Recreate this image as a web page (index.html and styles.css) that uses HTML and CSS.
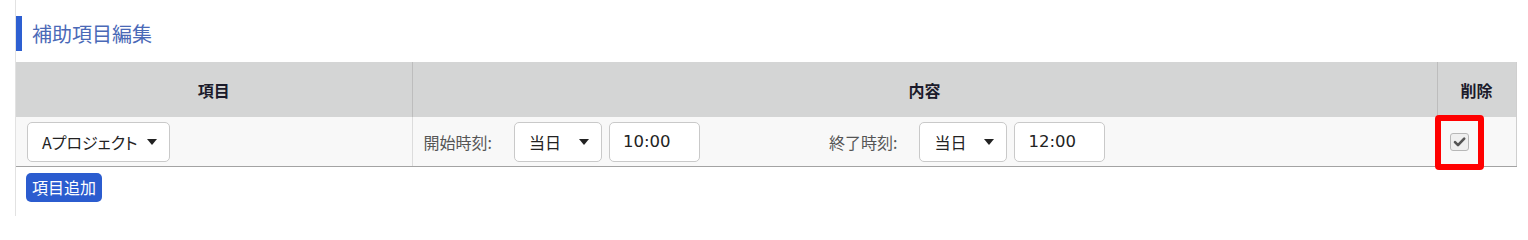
FILE: index.html
```html
<!DOCTYPE html>
<html lang="ja">
<head>
<meta charset="utf-8">
<title>補助項目編集</title>
<link rel="stylesheet" href="styles.css">
</head>
<body>
<div class="page">
  <h2 class="title">補助項目編集</h2>
  <table class="grid">
    <colgroup><col class="c1"><col class="c2"><col class="c3"></colgroup>
    <thead>
      <tr><th>項目</th><th>内容</th><th>削除</th></tr>
    </thead>
    <tbody>
      <tr>
        <td class="cell-item">
          <div class="select w-proj"><span class="sel-text">Aプロジェクト</span><i class="caret"></i></div>
        </td>
        <td class="cell-content">
          <div class="times">
            <div class="grp">
              <span class="lbl">開始時刻:</span>
              <div class="select w-day"><span class="sel-text">当日</span><i class="caret"></i></div>
              <div class="input">10:00</div>
            </div>
            <div class="grp">
              <span class="lbl">終了時刻:</span>
              <div class="select w-day"><span class="sel-text">当日</span><i class="caret"></i></div>
              <div class="input">12:00</div>
            </div>
          </div>
        </td>
        <td class="cell-del">
          <div class="del">
            <span class="cb"><svg viewBox="0 0 19 18" width="19" height="18"><path d="M5 9.2 L8 12.2 L14.2 5.6" fill="none" stroke="#555" stroke-width="2.6" stroke-linecap="round" stroke-linejoin="round"/></svg></span>
            <span class="mark"></span>
          </div>
        </td>
      </tr>
    </tbody>
  </table>
  <button class="add" type="button">項目追加</button>
</div>
</body>
</html>
```
FILE: styles.css
```css
html, body {
  margin: 0;
  padding: 0;
  background: #fff;
}
body {
  font-family: "Noto Sans CJK JP", sans-serif;
  font-size: 16px;
  color: #222;
}
.page {
  margin-left: 15px;
  border-left: 1px solid #e2e2e2;
  height: 216px;
  box-sizing: border-box;
  padding-top: 16px;
}
.title {
  margin: 0;
  height: 35px;
  line-height: 35px;
  border-left: 6px solid #2d5fd1;
  padding-left: 10px;
  font-size: 20px;
  font-weight: normal;
  color: #4a69b7;
}
.grid {
  margin-top: 11px;
  width: 1500px;
  border-collapse: collapse;
  table-layout: fixed;
}
.c1 { width: 396px; }
.c2 { width: 1025px; }
.c3 { width: 79px; }
.grid th {
  height: 55px;
  padding: 0;
  background: #d4d5d5;
  font-weight: bold;
  font-size: 16px;
  color: #1b1b2b;
  border-right: 1px solid #bdbdbd;
}
.grid th:last-child { border-right: 1px solid #cfcfcf; }
.grid td {
  height: 49px;
  padding: 0;
  background: #f8f8f8;
  border-bottom: 1px solid #a3a3a3;
  border-right: 1px solid #dcdcdc;
  vertical-align: middle;
}
.grid td:last-child { border-right: 1px solid #cfcfcf; }
.cell-item { padding-left: 11px !important; }
.cell-content { padding-left: 11px !important; }
.cell-del { padding-left: 12px !important; }

.select {
  display: flex;
  align-items: center;
  justify-content: space-between;
  box-sizing: border-box;
  height: 40px;
  padding: 0 12px 0 14px;
  border: 1px solid #c9c9c9;
  border-radius: 5px;
  background: #fff;
  color: #222;
  font-size: 16px;
}
.sel-text { font-feature-settings: "palt"; }
.w-proj { width: 143px; }
.w-day { width: 88px; }
.caret {
  width: 0;
  height: 0;
  border-left: 5px solid transparent;
  border-right: 5px solid transparent;
  border-top: 6px solid #222;
}
.times {
  display: flex;
  align-items: center;
  gap: 129px;
}
.grp {
  display: flex;
  align-items: center;
}
.lbl {
  color: #555;
  font-size: 16px;
  margin-right: 22px;
}
.input {
  box-sizing: border-box;
  width: 91px;
  height: 40px;
  margin-left: 7px;
  padding-left: 13px;
  border: 1px solid #c9c9c9;
  border-radius: 5px;
  background: #fff;
  display: flex;
  align-items: center;
  font-family: "DejaVu Sans", sans-serif;
  font-size: 16.5px;
  color: #222;
}
.del {
  position: relative;
  width: 19px;
  height: 18px;
}
.cb {
  display: block;
  box-sizing: border-box;
  width: 19px;
  height: 18px;
  border: 1px solid #b7b7b7;
  border-radius: 3px;
  background: #efefef;
}
.cb svg { display: block; margin: -1px; }
.mark {
  position: absolute;
  left: -15px;
  top: -18px;
  width: 49px;
  height: 55px;
  box-sizing: border-box;
  border: 6px solid #ff0000;
  border-radius: 4px;
}
.add {
  display: block;
  margin: 6px 0 0 10px;
  height: 29px;
  padding: 0 6px;
  border: none;
  border-radius: 5px;
  background: #2b5ccf;
  color: #fff;
  font-family: "Noto Sans CJK JP", sans-serif;
  font-size: 16px;
  line-height: 29px;
}
```
